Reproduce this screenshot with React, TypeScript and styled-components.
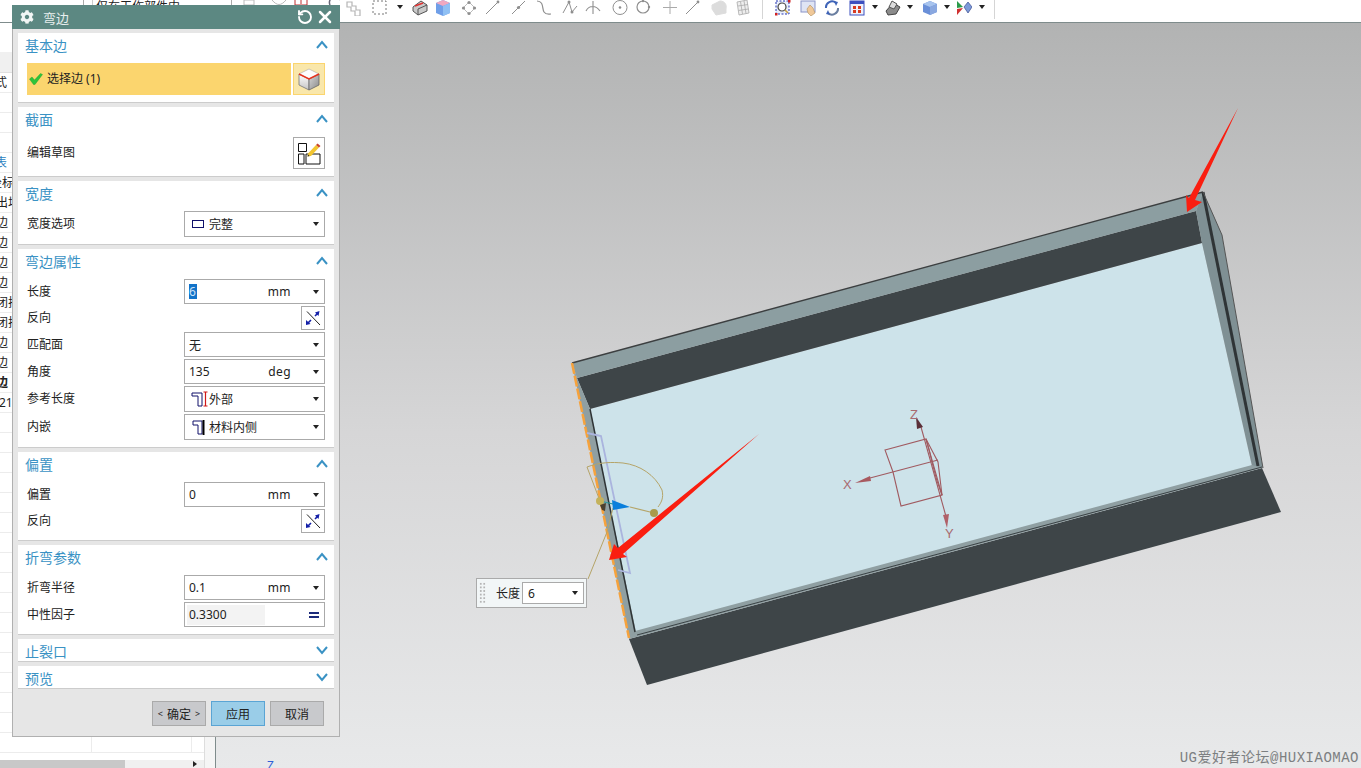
import React from 'react';
import styled, { createGlobalStyle } from 'styled-components';
import { FaCog } from 'react-icons/fa';
import { RotateCcw, X } from 'lucide-react';

const GlobalStyle = createGlobalStyle`
  html, body {
    margin: 0;
    padding: 0;
    width: 1361px;
    height: 768px;
    overflow: hidden;
    background: #fff;
    font-family: "Noto Sans", "Noto Sans CJK SC", sans-serif;
    font-size: 12px;
    color: #222;
  }
  * { box-sizing: border-box; }
`;

const Page = styled.div`
  position: relative;
  width: 1361px;
  height: 768px;
  display: flex;
  flex-direction: column;
  overflow: hidden;
`;

/* top toolbar */
const Toolbar = styled.div`
  flex: 0 0 23px;
  display: flex;
  align-items: flex-start;
  background: #fff;
  border-bottom: 1px solid #7f8c8c;
  overflow: hidden;
`;

const FilterBox = styled.div`
  margin-left: 83px;
  width: 149px;
  height: 22px;
  border-left: 1px solid #aaa;
  border-right: 1px solid #aaa;
  padding-left: 12px;
  line-height: 14px;
  white-space: nowrap;
  position: relative;
  &::before {
    content: '';
    position: absolute;
    left: 8px;
    top: 0;
    bottom: 0;
    border-left: 1px solid #ccc;
  }
`;

const ToolSlot = styled.div<{ $ml: number; $w?: number }>`
  flex: 0 0 auto;
  margin-left: ${(p) => p.$ml}px;
  width: ${(p) => p.$w ?? 16}px;
  height: 16px;
  svg { display: block; }
`;

const ToolSep = styled.div<{ $ml: number }>`
  flex: 0 0 1px;
  height: 19px;
  margin-left: ${(p) => p.$ml}px;
  background: #d5d5d5;
`;

const Caret = styled.div<{ $ml: number }>`
  flex: 0 0 auto;
  margin: 5px 0 0 ${(p) => p.$ml}px;
  border-left: 3.5px solid transparent;
  border-right: 3.5px solid transparent;
  border-top: 4px solid #222;
`;

/* main area */
const Main = styled.div`
  flex: 1;
  display: flex;
  min-height: 0;
`;

const LeftPanel = styled.div`
  flex: 0 0 216px;
  display: flex;
  border-right: 1px solid #7f8c8c;
  background: #f5f5f5;
`;

const TreePane = styled.div`
  flex: 0 0 205px;
  display: flex;
  flex-direction: column;
  background: #fff;
  border-right: 1px solid #ddd;
  overflow: hidden;
`;

const TreeHead = styled.div`
  margin-top: 29px;
  flex: 0 0 21px;
  background: #f0f0f0;
  border-bottom: 1px solid #e0e0e0;
`;

const TreeRow = styled.div`
  flex: 0 0 20px;
  height: 20px;
  display: grid;
  grid-template-columns: 92px 100px 1fr;
  border-bottom: 1px solid #ececec;
  overflow: hidden;
`;

const TreeCell = styled.div`
  border-right: 1px solid #ececec;
  line-height: 20px;
  white-space: nowrap;
  overflow: hidden;
  &:last-child { border-right: none; }
`;

const TreeText = styled.span<{ $shift: number; $bold?: boolean; $blue?: boolean }>`
  display: block;
  margin-left: ${(p) => p.$shift}px;
  font-weight: ${(p) => (p.$bold ? 700 : 400)};
  color: ${(p) => (p.$blue ? '#2c7fc0' : '#222')};
`;

const TreeFill = styled.div`
  flex: 1;
`;

const ScrollTrack = styled.div`
  flex: 0 0 8px;
  display: flex;
  align-items: center;
  justify-content: space-between;
  background: #f0f0f0;
  padding-right: 6px;
`;

const ScrollThumb = styled.div`
  width: 125px;
  height: 8px;
  background: #c8c8c8;
`;

const Viewport = styled.div`
  flex: 1;
  position: relative;
  background: linear-gradient(180deg, #b2b3b3 0%, #d6d6d7 55%, #e8e9ea 100%);
  overflow: hidden;
`;

const SceneSvg = styled.svg`
  position: absolute;
  inset: 0;
  width: 100%;
  height: 100%;
`;

const AxisMark = styled.div`
  position: absolute;
  left: 51px;
  bottom: -6px;
  color: #2f5fd8;
  font-size: 12px;
`;

const Watermark = styled.div`
  position: absolute;
  right: 2px;
  bottom: 2px;
  font-family: "Liberation Mono", "Noto Sans CJK SC", monospace;
  font-size: 14px;
  letter-spacing: 0.5px;
  color: #7c7f81;
  white-space: nowrap;
`;

/* on-canvas length label */
const LengthTag = styled.div`
  position: absolute;
  left: 260px;
  top: 555px;
  width: 111px;
  height: 30px;
  display: flex;
  align-items: center;
  background: #f2f6f7;
  border: 1px solid #aaa;
`;

const Grip = styled.div`
  width: 7px;
  height: 22px;
  margin-left: 2px;
  background-image: radial-gradient(#b5b5b5 1.1px, transparent 1.2px);
  background-size: 3.5px 3.6px;
`;

const TagLabel = styled.span`
  margin-left: 10px;
  font-size: 12px;
`;

const TagField = styled.div`
  margin-left: 2px;
  width: 62px;
  height: 22px;
  display: flex;
  align-items: center;
  justify-content: space-between;
  background: #fff;
  border: 1px solid #aaa;
  padding: 0 5px;
`;

/* dialog */
const Dialog = styled.div`
  position: absolute;
  left: 12px;
  top: 5px;
  width: 328px;
  height: 732px;
  display: flex;
  flex-direction: column;
  background: #e6e6e6;
  border: 1px solid #b0b0b0;
  border-top: none;
`;

const DialogHeader = styled.div`
  flex: 0 0 24px;
  margin: 0 -1px;
  display: flex;
  align-items: center;
  padding: 0 5px 0 8px;
  background: #5c8882;
  color: #e8efee;
  font-size: 13px;
`;

const DialogTitle = styled.span`
  flex: 1;
  margin-left: 9px;
`;

const HeaderBtn = styled.span`
  display: flex;
  margin-left: 2px;
`;

const DialogBody = styled.div`
  flex: 1;
  display: flex;
  flex-direction: column;
  gap: 4px;
  padding: 4px 5px 0;
`;

const SectionBox = styled.section<{ $open: boolean }>`
  background: #fff;
  border-bottom: 1px solid #ccc;
  padding-bottom: ${(p) => (p.$open ? 7 : 0)}px;
  flex: 0 0 auto;
  height: ${(p) => (p.$open ? 'auto' : '23px')};
  overflow: hidden;
`;

const SectionHead = styled.div<{ $open: boolean }>`
  height: ${(p) => (p.$open ? 30 : 23)}px;
  display: flex;
  align-items: flex-start;
  justify-content: space-between;
  padding: 3px 6px 0 7px;
  color: #3a92c4;
  font-size: 14px;
  line-height: 20px;
`;

const SectionContent = styled.div`
  display: flex;
  flex-direction: column;
  gap: 2px;
  padding: 0 9px;
`;

const FieldRow = styled.div`
  display: flex;
  align-items: center;
  justify-content: space-between;
`;

const RowLabel = styled.span`
  padding-bottom: 2px;
`;

const Field = styled.div<{ $h?: number }>`
  width: 141px;
  height: ${(p) => p.$h ?? 25}px;
  display: flex;
  align-items: center;
  padding: 0 5px 0 4px;
  background: #fff;
  border: 1px solid #aaa;
  font-size: 12px;
`;

const FieldIcon = styled.span`
  display: flex;
  flex: 0 0 18px;
  margin-left: 2px;
`;

const FieldValue = styled.span`
  flex: 1;
  white-space: nowrap;
`;

const FieldUnit = styled.span`
  margin-right: 22px;
  font-size: 12px;
  letter-spacing: 0.4px;
`;

const Selected = styled.span`
  display: inline-block;
  width: 8px;
  height: 15px;
  background: #1273c9;
  color: #cfe4f7;
  line-height: 15px;
`;

const DownMark = styled.span`
  flex: 0 0 auto;
  border-left: 3.5px solid transparent;
  border-right: 3.5px solid transparent;
  border-top: 4px solid #222;
`;

const ConstantValue = styled.span`
  flex: 0 0 78px;
  margin-left: -2px;
  padding-left: 2px;
  height: 20px;
  line-height: 20px;
  background: #f3f3f3;
  font-size: 12px;
`;

const EqualMark = styled.span`
  margin-left: auto;
  width: 10px;
  height: 6px;
  border-top: 2px solid #1c2a7a;
  border-bottom: 2px solid #1c2a7a;
`;

const IconButton = styled.button<{ $size: number; $h?: number }>`
  width: ${(p) => p.$size}px;
  height: ${(p) => p.$h ?? p.$size}px;
  padding: 0;
  display: flex;
  align-items: center;
  justify-content: center;
  background: #fff;
  border: 1px solid #aaa;
`;

const SelectBar = styled.div`
  display: flex;
  gap: 2px;
  height: 32px;
`;

const SelectLabel = styled.div`
  flex: 1;
  display: flex;
  align-items: center;
  gap: 4px;
  padding-left: 2px;
  background: #fbd56e;
`;

const SelectCube = styled.div`
  width: 32px;
  display: flex;
  align-items: center;
  justify-content: center;
  background: #f9e7ab;
  border: 1px solid #fbd56e;
`;

const SketchRow = styled(FieldRow)`
  height: 32px;
`;

const Footer = styled.div`
  display: flex;
  justify-content: flex-end;
  gap: 5px;
  padding: 8px 10px 0 0;
`;

const FooterButton = styled.button<{ $primary?: boolean }>`
  width: 54px;
  height: 25px;
  padding: 0;
  display: flex;
  align-items: center;
  justify-content: center;
  white-space: nowrap;
  font-family: inherit;
  font-size: 12px;
  color: #222;
  background: ${(p) => (p.$primary ? '#9acde8' : '#c8c9cc')};
  border: 1px solid ${(p) => (p.$primary ? '#5aa4d4' : '#aaa')};
`;

const OkSide = styled.span`
  margin: 0 4px;
  font-size: 9px;
`;

/* drawings */
const Chevron = ({ up }: { up: boolean }) => (
  <svg width="12" height="9" viewBox="0 0 12 9" style={{ marginTop: up ? 4 : 4, flexShrink: 0 }}>
    <path
      d={up ? 'M1 8 L6 2 L11 8' : 'M1 1 L6 7 L11 1'}
      fill="none"
      stroke="#3a92c4"
      strokeWidth="2"
    />
  </svg>
);

const ReverseIcon = () => (
  <svg width="16" height="16" viewBox="0 0 16 16">
    <path d="M3 13 L6 10 M10 6 L13 3" stroke="#1420a8" strokeWidth="1.6" />
    <path d="M10 2.5 L14.5 1 L13.5 6 Z M1 10 L5.5 14 L1 15 Z" fill="#1420a8" />
    <path d="M2 1.5 L15 15" stroke="#222" strokeWidth="1" />
  </svg>
);

const CubeIcon = () => (
  <svg width="24" height="24" viewBox="0 0 24 24">
    <defs>
      <linearGradient id="cubeLeft" x1="0" y1="0" x2="0" y2="1">
        <stop offset="0" stopColor="#ffffff" />
        <stop offset="1" stopColor="#c4c4c4" />
      </linearGradient>
      <linearGradient id="cubeRight" x1="0" y1="0" x2="1" y2="1">
        <stop offset="0" stopColor="#d8d8d8" />
        <stop offset="1" stopColor="#8a8a8a" />
      </linearGradient>
    </defs>
    <path d="M2 7 L12 12 L12 23 L2 18 Z" fill="url(#cubeLeft)" stroke="#777" strokeWidth="0.8" />
    <path d="M22 7 L12 12 L12 23 L22 18 Z" fill="url(#cubeRight)" stroke="#666" strokeWidth="0.8" />
    <path d="M2 7 L12 2 L22 7 L12 12 Z" fill="#fdfdfd" stroke="#aaa" strokeWidth="0.6" />
    <path d="M2 7 L12 12 L22 7" fill="none" stroke="#e8341c" strokeWidth="1.4" />
  </svg>
);

const SketchIcon = () => (
  <svg width="24" height="24" viewBox="0 0 24 24">
    <path d="M1.5 2.5 H9.5 V10.5 H1.5 Z M1.5 13 H7 V23 H1.5 Z M9 13 H23 V23 H9 Z" fill="#fff" stroke="#111" strokeWidth="1" />
    <path d="M11 12.5 L19 4 L22 6.5 L14 15 L10.5 15.5 Z" fill="#f2c530" />
    <path d="M19 4 L20.5 2.5 L23.5 5 L22 6.5 Z" fill="#c9442c" />
    <path d="M10.5 15.5 L11 13.5 L12.5 15 Z" fill="#222" />
  </svg>
);

const WidthIcon = () => (
  <svg width="14" height="10" viewBox="0 0 14 10">
    <rect x="1.5" y="1.5" width="11" height="7" fill="#fff" stroke="#10106a" strokeWidth="1" />
  </svg>
);

const OutsideIcon = () => (
  <svg width="18" height="16" viewBox="0 0 18 16">
    <path d="M1 2 H11 V15 H7 V5 H1 Z" fill="#fff" stroke="#10106a" strokeWidth="1" />
    <path d="M14.5 1 V15 M12.5 1 H16.5 M12.5 15 H16.5" stroke="#d01818" strokeWidth="1.2" fill="none" />
  </svg>
);

const InsideIcon = () => (
  <svg width="18" height="16" viewBox="0 0 18 16">
    <path d="M2 2 H11 V15 H7 V6 H2 Z" fill="#fff" stroke="#10106a" strokeWidth="1" />
    <path d="M12.5 1 V16" stroke="#000" strokeWidth="2" />
  </svg>
);

const GreenCheck = () => (
  <svg width="14" height="12" viewBox="0 0 14 12">
    <path d="M0.5 6 L3 4 L5.5 7 L11.5 0.5 L13.5 1.5 L6 11.5 L4.5 11.5 Z" fill="#2fc43a" stroke="#1d9c2a" strokeWidth="0.4" />
  </svg>
);

const g = '#8f8f8f';

const toolDrawings: Record<string, React.ReactNode> = {
  stack: (
    <path d="M2 2 H7 V6 H11 V10 H15 V16 H10 V11 H6 V7 H2 Z" fill="none" stroke="#b5b5b5" strokeWidth="1.2" />
  ),
  dashed: <rect x="1" y="1" width="13" height="13" fill="none" stroke="#777" strokeDasharray="2 2" />,
  box: (
    <>
      <path d="M1 7 L9 1 L15 5 L15 11 L6 15 L1 11 Z" fill="#c9c9c9" stroke="#555" />
      <path d="M3 6 L11 3" stroke="#e03030" strokeWidth="1.6" />
      <path d="M6 15 L6 9 L15 5" fill="none" stroke="#555" />
    </>
  ),
  blueCube: (
    <>
      <path d="M1 3 L8 0 L15 3 L15 13 L8 16 L1 13 Z" fill="#6f9fe8" />
      <path d="M1 3 L8 0 L15 3 L8 6 Z" fill="#f0a8c0" />
      <path d="M8 6 L15 3 L15 13 L8 16 Z" fill="#8fc0f4" />
    </>
  ),
  diamond: (
    <>
      <path d="M8 2 L14 8 L8 14 L2 8 Z" fill="none" stroke="#bbb" />
      <circle cx="8" cy="2.5" r="1.6" fill={g} />
      <circle cx="8" cy="13.5" r="1.6" fill={g} />
      <circle cx="2.5" cy="8" r="1.6" fill={g} />
      <circle cx="13.5" cy="8" r="1.6" fill={g} />
    </>
  ),
  line1: (
    <>
      <path d="M1 14 L14 1" stroke={g} />
      <circle cx="13" cy="2" r="1.4" fill={g} />
    </>
  ),
  line2: (
    <>
      <path d="M1 14 L14 1" stroke={g} />
      <circle cx="7.5" cy="7.5" r="1.6" fill={g} />
    </>
  ),
  curve: <path d="M1 1 C8 1 6 9 8 12 C10 15 13 14 15 14" fill="none" stroke={g} strokeWidth="1.2" />,
  spline: (
    <>
      <path d="M1 13 L7 2 L10 12 L15 6" fill="none" stroke={g} />
      <circle cx="7" cy="2" r="1.5" fill={g} />
      <circle cx="10" cy="12" r="1.5" fill={g} />
    </>
  ),
  arc: <path d="M1 11 C4 5 11 5 15 11 M8 1 V14" fill="none" stroke={g} strokeWidth="1.1" />,
  circleDot: (
    <>
      <circle cx="8" cy="7.5" r="7" fill="none" stroke={g} />
      <circle cx="8" cy="7.5" r="1.3" fill={g} />
    </>
  ),
  circle: (
    <>
      <circle cx="8" cy="7" r="6" fill="none" stroke={g} strokeWidth="1.2" />
      <circle cx="8" cy="1" r="1.2" fill={g} />
      <circle cx="14" cy="7" r="1.2" fill={g} />
    </>
  ),
  plus: <path d="M8 1 V14 M1 7.5 H15" stroke="#aaa" />,
  cylinder: <path d="M1 5 L9 1 C14 1 16 5 15 9 L15 13 L5 15 L1 9 Z" fill="#dcdcdc" stroke="#ddd" />,
  grid: <path d="M2 2 L12 0 L14 13 L4 15 Z M5.5 1.5 L7.5 14 M9 1 L11 13.5 M3 6 L13 4.5 M3.5 10.5 L13.5 9" fill="#eee" stroke="#aaa" strokeWidth="0.8" />,
  zoomFit: (
    <>
      <rect x="1" y="1" width="13" height="13" fill="#e8eefc" stroke="#2333b0" strokeDasharray="2 1.5" />
      <circle cx="7" cy="7" r="4" fill="#fff" stroke="#444" strokeWidth="1.2" />
      <path d="M10 10 L13 13" stroke="#c9a040" strokeWidth="1.6" />
      <rect x="0" y="13" width="2.5" height="2.5" fill="#d02020" />
      <rect x="13" y="0" width="2.5" height="2.5" fill="#d02020" />
    </>
  ),
  pan: (
    <>
      <rect x="1" y="1" width="14" height="11" fill="#dfe4f4" stroke="#8a94c8" />
      <path d="M7 9 L10 5 L13 8 L15 13 L11 16 L8 13 Z" fill="#f0c898" stroke="#b09060" strokeWidth="0.6" />
    </>
  ),
  rotate: (
    <>
      <path d="M2 8 A6 6 0 0 1 12 3" fill="none" stroke="#3f64b8" strokeWidth="2" />
      <path d="M14 8 A6 6 0 0 1 4 13" fill="none" stroke="#6a7ea0" strokeWidth="2" />
      <path d="M10 1 L14 2 L12 6 Z M6 15 L2 14 L4 10 Z" fill="#3f64b8" />
    </>
  ),
  fit: (
    <>
      <rect x="1" y="1" width="14" height="14" fill="#eef1fb" stroke="#3c50c0" />
      <rect x="1" y="1" width="14" height="3" fill="#3c50c0" />
      <path d="M4 6 H7 V9 H4 Z M9 6 H12 V9 H9 Z M4 10 H7 V13 H4 Z M9 10 H12 V13 H9 Z" fill="#d83a20" />
    </>
  ),
  scanner: (
    <>
      <path d="M1 11 L8 3 L15 7 L11 14 L3 15 Z" fill="#8b8b8b" stroke="#444" />
      <path d="M7 1 L12 4 L9 9 L4 7 Z" fill="#dcdcdc" stroke="#555" />
    </>
  ),
  cube: (
    <>
      <path d="M1 4 L8 1 L15 4 L15 12 L8 15 L1 12 Z" fill="#6a8fd8" />
      <path d="M1 4 L8 1 L15 4 L8 7 Z" fill="#a8c4ee" />
      <path d="M8 7 L15 4 L15 12 L8 15 Z" fill="#8aa8e0" />
    </>
  ),
  section: (
    <>
      <path d="M1 1 L7 7 L1 8 Z" fill="#2a9a4a" />
      <path d="M1 9 L7 8 L1 15 Z" fill="#d03030" />
      <path d="M8 7 L12 2 L16 7 L12 13 Z" fill="#7c9ad8" stroke="#3a4a90" strokeWidth="0.7" />
    </>
  ),
  ghost1: <path d="M2 0 H12 V5 H2 Z" fill="none" stroke="#bbb" />,
  ghost2: <path d="M1 0 C6 6 10 6 15 0" fill="none" stroke="#bbb" />,
  ghost3: <path d="M2 0 V5 H14 V0 M8 0 V4" fill="none" stroke="#c03030" />,
  ghost4: <path d="M2 5 A5 5 0 0 1 12 0" fill="none" stroke="#667" strokeWidth="1.5" />,
};

type ToolItem =
  | { kind: 'icon'; name: string; ml: number; w?: number }
  | { kind: 'caret'; ml: number }
  | { kind: 'sep'; ml: number };

const tools: ToolItem[] = [
  { kind: 'icon', name: 'ghost1', ml: 10 },
  { kind: 'icon', name: 'ghost2', ml: 13 },
  { kind: 'icon', name: 'ghost3', ml: 6 },
  { kind: 'icon', name: 'ghost4', ml: 19 },
  { kind: 'icon', name: 'stack', ml: 1 },
  { kind: 'icon', name: 'dashed', ml: 11 },
  { kind: 'caret', ml: 9 },
  { kind: 'icon', name: 'box', ml: 9 },
  { kind: 'icon', name: 'blueCube', ml: 7 },
  { kind: 'icon', name: 'diamond', ml: 10 },
  { kind: 'icon', name: 'line1', ml: 8 },
  { kind: 'icon', name: 'line2', ml: 10 },
  { kind: 'icon', name: 'curve', ml: 9 },
  { kind: 'icon', name: 'spline', ml: 10 },
  { kind: 'icon', name: 'arc', ml: 7 },
  { kind: 'icon', name: 'circleDot', ml: 11 },
  { kind: 'icon', name: 'circle', ml: 7 },
  { kind: 'icon', name: 'plus', ml: 11 },
  { kind: 'icon', name: 'line1', ml: 7 },
  { kind: 'icon', name: 'cylinder', ml: 10 },
  { kind: 'icon', name: 'grid', ml: 8 },
  { kind: 'sep', ml: 11 },
  { kind: 'icon', name: 'zoomFit', ml: 12 },
  { kind: 'icon', name: 'pan', ml: 9 },
  { kind: 'icon', name: 'rotate', ml: 8 },
  { kind: 'icon', name: 'fit', ml: 9 },
  { kind: 'caret', ml: 7 },
  { kind: 'icon', name: 'scanner', ml: 7 },
  { kind: 'caret', ml: 6 },
  { kind: 'icon', name: 'cube', ml: 9 },
  { kind: 'caret', ml: 6 },
  { kind: 'icon', name: 'section', ml: 6 },
  { kind: 'caret', ml: 7 },
  { kind: 'sep', ml: 9 },
];

const treeRows: { text: string; shift: number; bold?: boolean; blue?: boolean }[] = [
  { text: '式', shift: -5 },
  { text: '', shift: 0 },
  { text: '', shift: 0 },
  { text: '', shift: 0 },
  { text: '表', shift: -5, blue: true },
  { text: '坐标', shift: -10 },
  { text: '出场', shift: -4 },
  { text: '边', shift: -4 },
  { text: '边', shift: -4 },
  { text: '边', shift: -4 },
  { text: '边', shift: -4 },
  { text: '闭排', shift: -4 },
  { text: '闭排', shift: -4 },
  { text: '边', shift: -4 },
  { text: '边', shift: -4 },
  { text: '边', shift: -4, bold: true },
  { text: '21]', shift: -1 },
  ...Array.from({ length: 17 }, () => ({ text: '', shift: 0 })),
];

const Section = ({
  title,
  open = true,
  children,
}: {
  title: string;
  open?: boolean;
  children?: React.ReactNode;
}) => (
  <SectionBox $open={open}>
    <SectionHead $open={open}>
      <span>{title}</span>
      <Chevron up={open} />
    </SectionHead>
    {open && <SectionContent>{children}</SectionContent>}
  </SectionBox>
);

const Scene = () => (
  <SceneSvg viewBox="216 23 1145 745">
    {/* sheet metal box */}
    <polygon points="590,409 1202,243 1252,466 635,632" fill="#cde3ea" />
    <polygon points="577,378 1196,211 1202,243 590,409" fill="#3e4548" />
    <polygon points="572,363 1203,192 1196,211 577,378" fill="#8c9ea1" />
    <polygon points="1203,192 1222,235 1263,468 1252,466 1202,243 1196,211" fill="#7f9094" />
    <polygon points="572,363 577,378 590,409 636,632 629,639" fill="#8f9fa2" />
    <polygon points="629,639 1262,468 1281,512 647,685" fill="#3e4548" />
    <polygon points="635,631 1252,465 1262,468 629,639" fill="#8f9fa2" />
    <path d="M637,635 L1262,467" stroke="#3a4144" strokeWidth="1" />
    <path d="M572,363 L1203,192" stroke="#3c3f40" strokeWidth="1.3" />
    <path d="M1203,192 L1258,466" stroke="#2f3436" strokeWidth="3" />
    <path d="M1203,192 L1222,235 L1263,468" fill="none" stroke="#555" strokeWidth="1" />
    <path d="M590,409 L635,632" stroke="#2f3436" strokeWidth="1.5" />
    <path d="M572,363 L629,638" stroke="#f6a23c" strokeWidth="2.5" strokeDasharray="11 2" />

    {/* drag handles */}
    <path d="M587,433 L601,436 L630,573 L618,570" fill="none" stroke="#aab4de" strokeWidth="1.8" />
    <path
      d="M600,501 L587,467 C600,462 612,462 623,463 C640,465 655,475 662,490 C664,498 661,503 658,507"
      fill="none"
      stroke="#b5a468"
      strokeWidth="1"
    />
    <path d="M630,507 L654,513" stroke="#b5a468" strokeWidth="1.2" />
    <path d="M600,501 L613,504" stroke="#2a9a9a" strokeWidth="1.2" />
    <path d="M613,508 L607,532 L588,579" fill="none" stroke="#b5a468" strokeWidth="1" />
    <polygon points="612,500 630,507 613,510" fill="#0a7fdc" />
    <circle cx="600" cy="501" r="4" fill="#c4b25c" />
    <path d="M600,505 L606,503 L605,511 L602,510 Z" fill="#4a4030" />
    <circle cx="654" cy="513" r="4" fill="#a89a4a" />

    {/* triad */}
    <g fill="none" stroke="#a05a60" strokeWidth="1.1">
      <path d="M885,450 L926,439 L942,495 L901,506 L893,472 Z" />
      <path d="M926,439 C934,465 932,470 942,495" />
      <path d="M926,439 L938,462 L942,495" />
      <path d="M870,478 L938,460" />
      <path d="M921,427 L947,520" />
    </g>
    <polygon points="916,417 923,427 917,429" fill="#5a2f38" />
    <polygon points="855,483 870,476 871,481" fill="#a85a60" />
    <polygon points="943,515 949,514 947,528" fill="#b06068" />
    <text x="910" y="419" fill="#a86a70" fontSize="13" fontFamily="Liberation Sans">Z</text>
    <text x="843" y="489" fill="#a86a70" fontSize="13" fontFamily="Liberation Sans">X</text>
    <text x="945" y="538" fill="#a86a70" fontSize="13" fontFamily="Liberation Sans">Y</text>

    {/* red callouts */}
    <polygon points="1238,108 1195,200 1202,202 1187,212 1186,195 1189,198" fill="#fa1e10" />
    <polygon points="759,434 623,554 627,557 609,560 614,544 618,548" fill="#fa1e10" />
  </SceneSvg>
);

const App = () => (
  <Page>
    <GlobalStyle />
    <Toolbar>
      <FilterBox>仅在工作部件内</FilterBox>
      {tools.map((t, i) => {
        if (t.kind === 'caret') return <Caret key={i} $ml={t.ml} />;
        if (t.kind === 'sep') return <ToolSep key={i} $ml={t.ml} />;
        return (
          <ToolSlot key={i} $ml={t.ml}>
            <svg width="16" height="16" viewBox="0 0 16 16">
              {toolDrawings[t.name]}
            </svg>
          </ToolSlot>
        );
      })}
    </Toolbar>

    <Main>
      <LeftPanel>
        <TreePane>
          <TreeHead />
          {treeRows.map((r, i) => (
            <TreeRow key={i}>
              <TreeCell>
                <TreeText $shift={r.shift} $bold={r.bold} $blue={r.blue}>
                  {r.text}
                </TreeText>
              </TreeCell>
              <TreeCell />
              <TreeCell />
            </TreeRow>
          ))}
          <TreeFill />
          <ScrollTrack>
            <ScrollThumb />
            <DownMark style={{ transform: 'rotate(-90deg)' }} />
          </ScrollTrack>
        </TreePane>
      </LeftPanel>

      <Viewport>
        <Scene />
        <LengthTag>
          <Grip />
          <TagLabel>长度</TagLabel>
          <TagField>
            <span>6</span>
            <DownMark />
          </TagField>
        </LengthTag>
        <AxisMark>Z</AxisMark>
        <Watermark>UG爱好者论坛@HUXIAOMAO</Watermark>
      </Viewport>
    </Main>

    <Dialog>
      <DialogHeader>
        <FaCog size={14} color="#f2f6f5" />
        <DialogTitle>弯边</DialogTitle>
        <HeaderBtn>
          <RotateCcw size={16} strokeWidth={2.8} color="#fff" />
        </HeaderBtn>
        <HeaderBtn>
          <X size={20} strokeWidth={3} color="#fff" />
        </HeaderBtn>
      </DialogHeader>
      <DialogBody>
        <Section title="基本边">
          <SelectBar>
            <SelectLabel>
              <GreenCheck />
              <RowLabel>选择边 (1)</RowLabel>
            </SelectLabel>
            <SelectCube>
              <CubeIcon />
            </SelectCube>
          </SelectBar>
        </Section>
        <Section title="截面">
          <SketchRow>
            <RowLabel>编辑草图</RowLabel>
            <IconButton $size={32}>
              <SketchIcon />
            </IconButton>
          </SketchRow>
        </Section>
        <Section title="宽度">
          <FieldRow>
            <RowLabel>宽度选项</RowLabel>
            <Field $h={26}>
              <FieldIcon>
                <WidthIcon />
              </FieldIcon>
              <FieldValue>完整</FieldValue>
              <DownMark />
            </Field>
          </FieldRow>
        </Section>
        <Section title="弯边属性">
          <FieldRow>
            <RowLabel>长度</RowLabel>
            <Field>
              <FieldValue>
                <Selected>6</Selected>
              </FieldValue>
              <FieldUnit>mm</FieldUnit>
              <DownMark />
            </Field>
          </FieldRow>
          <FieldRow>
            <RowLabel>反向</RowLabel>
            <IconButton $size={24}>
              <ReverseIcon />
            </IconButton>
          </FieldRow>
          <FieldRow>
            <RowLabel>匹配面</RowLabel>
            <Field>
              <FieldValue>无</FieldValue>
              <DownMark />
            </Field>
          </FieldRow>
          <FieldRow>
            <RowLabel>角度</RowLabel>
            <Field>
              <FieldValue>135</FieldValue>
              <FieldUnit>deg</FieldUnit>
              <DownMark />
            </Field>
          </FieldRow>
          <FieldRow>
            <RowLabel>参考长度</RowLabel>
            <Field $h={26}>
              <FieldIcon>
                <OutsideIcon />
              </FieldIcon>
              <FieldValue>外部</FieldValue>
              <DownMark />
            </Field>
          </FieldRow>
          <FieldRow>
            <RowLabel>内嵌</RowLabel>
            <Field $h={26}>
              <FieldIcon>
                <InsideIcon />
              </FieldIcon>
              <FieldValue>材料内侧</FieldValue>
              <DownMark />
            </Field>
          </FieldRow>
        </Section>
        <Section title="偏置">
          <FieldRow>
            <RowLabel>偏置</RowLabel>
            <Field>
              <FieldValue>0</FieldValue>
              <FieldUnit>mm</FieldUnit>
              <DownMark />
            </Field>
          </FieldRow>
          <FieldRow>
            <RowLabel>反向</RowLabel>
            <IconButton $size={24}>
              <ReverseIcon />
            </IconButton>
          </FieldRow>
        </Section>
        <Section title="折弯参数">
          <FieldRow>
            <RowLabel>折弯半径</RowLabel>
            <Field>
              <FieldValue>0.1</FieldValue>
              <FieldUnit>mm</FieldUnit>
              <DownMark />
            </Field>
          </FieldRow>
          <FieldRow>
            <RowLabel>中性因子</RowLabel>
            <Field>
              <ConstantValue>0.3300</ConstantValue>
              <EqualMark />
            </Field>
          </FieldRow>
        </Section>
        <Section title="止裂口" open={false} />
        <Section title="预览" open={false} />
        <Footer>
          <FooterButton>
            <OkSide>&lt;</OkSide>确定<OkSide>&gt;</OkSide>
          </FooterButton>
          <FooterButton $primary>应用</FooterButton>
          <FooterButton>取消</FooterButton>
        </Footer>
      </DialogBody>
    </Dialog>
  </Page>
);

export default App;
